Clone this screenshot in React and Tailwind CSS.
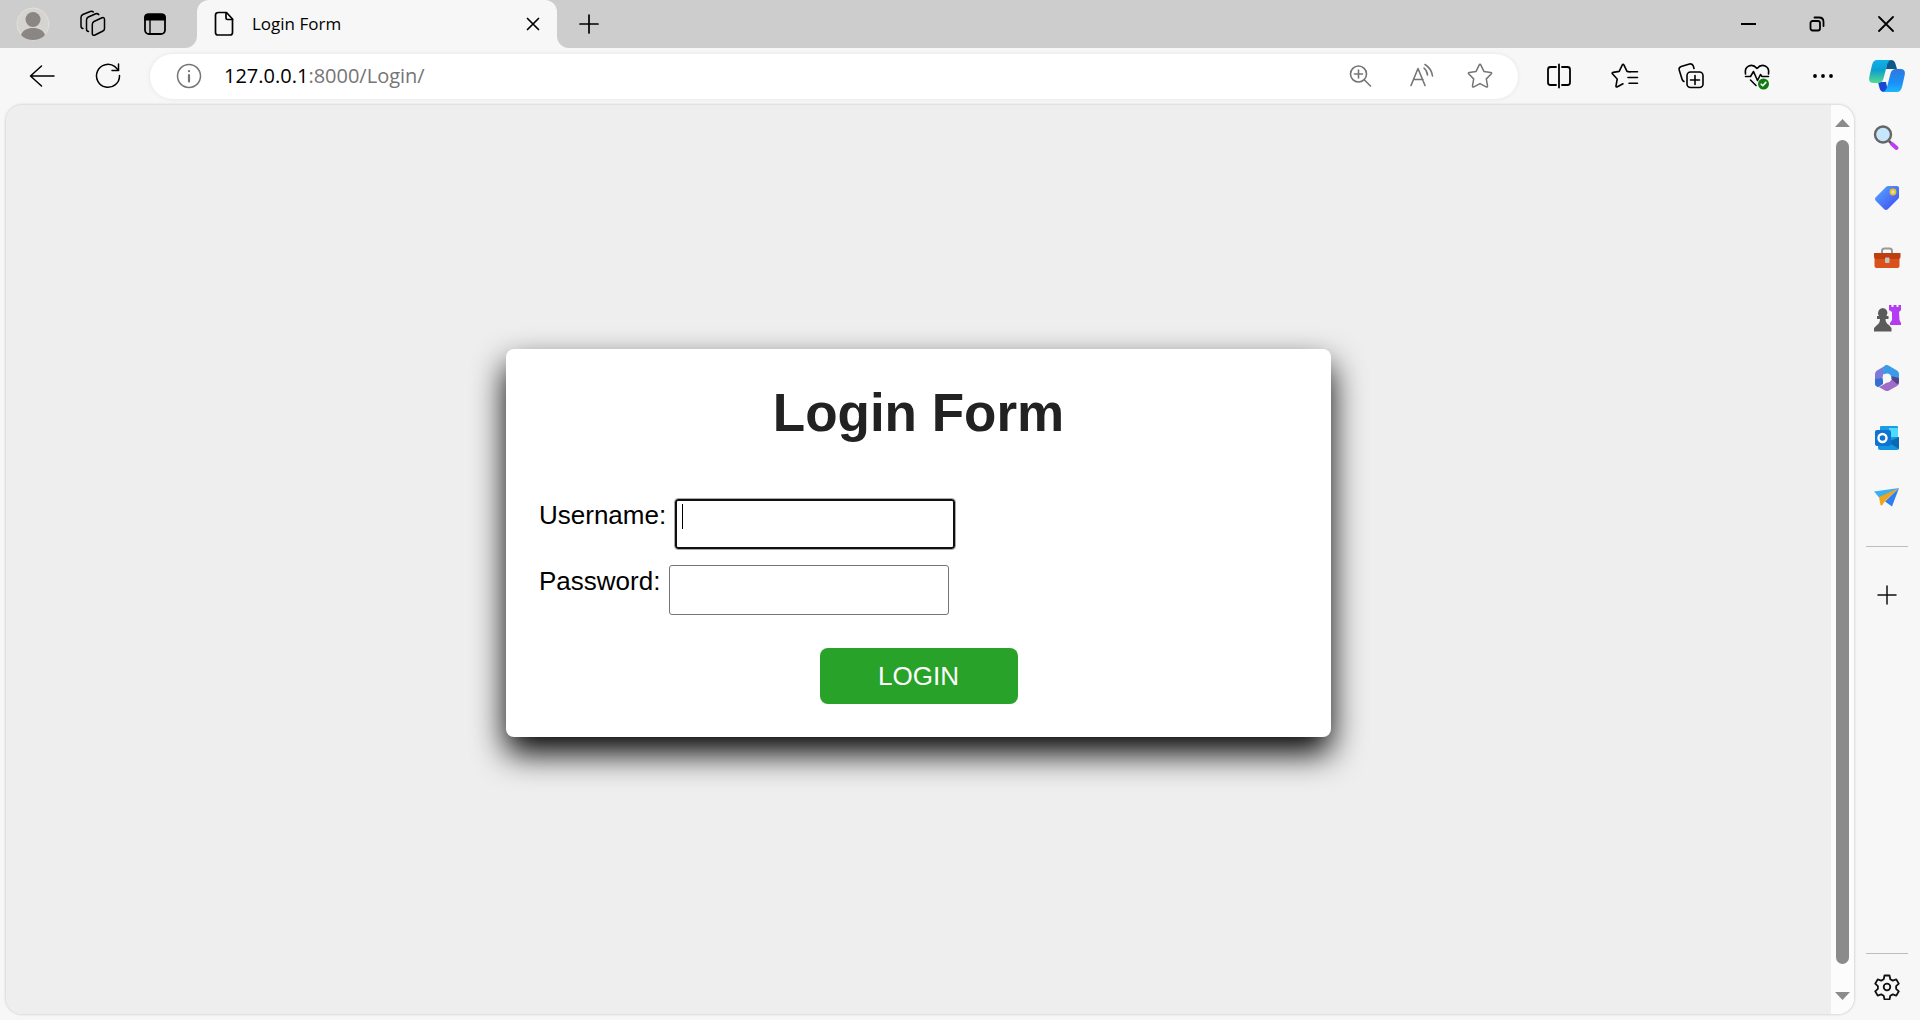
const Svg = ({ children, w = 28, h, sw = 2, className = "" }) => (
  <svg
    width={w}
    height={h || w}
    viewBox={`0 0 ${w} ${h || w}`}
    fill="none"
    stroke="currentColor"
    strokeWidth={sw}
    strokeLinecap="round"
    strokeLinejoin="round"
    className={`shrink-0 ${className}`}
    aria-hidden="true"
  >
    {children}
  </svg>
);

const IconButton = ({ label, className = "", children }) => (
  <button type="button" aria-label={label} className={`flex shrink-0 items-center justify-center ${className}`}>
    {children}
  </button>
);

const STAR = "M13.100 3.100q.9-1.600 1.800 0l3 6.300 6.700 1q1.800.3.600 1.600l-4.900 4.900 1.200 6.900q.2 1.800-1.400 1L14 21.600l-6.100 3.200q-1.600.8-1.400-1l1.200-6.900-4.900-4.900q-1.200-1.300.6-1.600l6.700-1z";

function TabStrip() {
  return (
    <header className="flex h-12 items-stretch bg-[#f7f7f7] text-black">
      <div className="flex w-[197px] shrink-0 items-center rounded-br-xl bg-[#cdcdcd] pl-[15px]">
        <IconButton label="Profile" className="w-9">
          <Svg w={34} sw={1}>
            <circle cx="17" cy="17" r="16" fill="#d6d4d0" stroke="#e3e1dd" />
            <circle cx="17" cy="12.500" r="7.500" fill="#8a8683" stroke="none" />
            <path d="M5 28c2-5 6-7 12-7s10 2 12 7c-3 3.500-7 5-12 5s-9-1.500-12-5z" fill="#8a8683" stroke="none" />
          </Svg>
        </IconButton>
        <IconButton label="Workspaces" className="ml-6 w-9">
          <Svg w={28} sw={1.500}>
            <path d="M15 11.500l8-3.700q2.500-.8 2.500 1.700v9q0 1.800-1.500 2.500l-8 4q-2.700 1-2.700-1.500v-9q0-2.200 1.700-3z" />
            <path d="M9.500 21.500q-2-.3-2-2.500v-9q0-2 1.800-3l7.500-3.200q2-.6 3 .8" />
            <path d="M4 18.500q-2-.3-2-2.500V7.500q0-2 1.800-3l7.500-3q2-.7 3 .5" />
          </Svg>
        </IconButton>
        <IconButton label="Tab actions menu" className="ml-[26px] w-9">
          <Svg w={24} sw={1.800}>
            <rect x="2" y="2.500" width="20" height="19.500" rx="4" />
            <path d="M2 7.500V5.500q0-3 3-3h14q3 0 3 3v2z" fill="currentColor" />
            <path d="M7 8v14" strokeWidth="1.400" />
          </Svg>
        </IconButton>
      </div>
      <div className="flex w-[360px] bg-[linear-gradient(#cdcdcd_50%,#f7f7f7_50%)]">
        <div className="flex flex-1 items-center rounded-t-xl bg-[#f7f7f7] pr-3 pl-[15px]">
          <Svg w={24} h={26} sw={1.700}>
            <path d="M6.500 1.500h8l6 6.500v13.500q0 2.500-2.500 2.500H6q-2.500 0-2.500-2.500v-17.500q0-2.500 3-2.500z" />
            <path d="M14 2v5q0 1.500 1.500 1.500h5" />
          </Svg>
          <span className="ml-4 flex-1 text-[17px]">Login Form</span>
          <IconButton label="Close tab" className="size-6">
            <Svg w={14} sw={1.700}><path d="M1.500 1.500l11 11M12.500 1.500l-11 11" /></Svg>
          </IconButton>
        </div>
      </div>
      <div className="flex flex-1 rounded-bl-xl bg-[#cdcdcd]">
        <IconButton label="New tab" className="w-16">
          <Svg w={20} sw={1.700}><path d="M10 1v18M1 10h18" /></Svg>
        </IconButton>
        <div className="flex-1" />
        <IconButton label="Minimize" className="w-[69px]">
          <Svg w={16} sw={2}><path d="M1 8h15" strokeLinecap="butt" /></Svg>
        </IconButton>
        <IconButton label="Restore" className="w-[69px]">
          <Svg w={16} sw={1.800}>
            <rect x="1.500" y="5" width="9.500" height="9.500" rx="2" />
            <path d="M5.500 1.500h4.500q4.500 0 4.500 4.500v4" />
          </Svg>
        </IconButton>
        <IconButton label="Close window" className="w-[69px]">
          <Svg w={16} sw={1.800}><path d="M1 1l14 14M15 1L1 15" /></Svg>
        </IconButton>
      </div>
    </header>
  );
}

function Toolbar() {
  return (
    <nav className="flex h-[57px] items-center bg-[#f7f7f7] pb-px text-black">
      <IconButton label="Back" className="ml-5 w-11">
        <Svg w={26} sw={1.500}><path d="M25 13H1.500M12.500 3L1.500 13l11 10" /></Svg>
      </IconButton>
      <IconButton label="Refresh" className="ml-[22px] w-11">
        <Svg w={26} sw={1.500}>
          <path d="M24.500 12.500a11.500 11.500 0 1 1-4.500-8.800l3.500 3.600" />
          <path d="M23.500 1v6.500h-6.500" />
        </Svg>
      </IconButton>
      <form className="ml-5 flex h-[45px] flex-1 items-center rounded-full bg-white pr-6 pl-[26px] text-[#757575] shadow-[0_0_5px_rgba(0,0,0,0.08)]">
        <IconButton label="View site information">
          <Svg w={26} sw={1.500}>
            <circle cx="13" cy="13" r="11.500" />
            <path d="M13 12v6.500M13 8v.2" strokeWidth="2.200" />
          </Svg>
        </IconButton>
        <a href="#address" className="ml-[22px] flex-1 text-[20px]">
          <span className="text-black">127.0.0.1</span>:8000/Login/
        </a>
        <IconButton label="Zoom">
          <Svg w={24} sw={1.600}>
            <circle cx="10.500" cy="10" r="8" />
            <path d="M16.500 16l6 6M10.500 6v8M6.500 10h8" />
          </Svg>
        </IconButton>
        <IconButton label="Read aloud" className="ml-9">
          <Svg w={26} sw={1.600}>
            <path d="M3 22.500L10 5.500l7 17M5.500 16.500h9.500M16 5q3 2.500 3.500 7M17 1.500q6.500 4 7.500 11.500" />
          </Svg>
        </IconButton>
        <IconButton label="Add to favorites" className="ml-8">
          <Svg w={28} sw={1.500}><path d={STAR} /></Svg>
        </IconButton>
      </form>
      <div className="ml-[27px] flex items-center gap-[38px]">
        <IconButton label="Split screen">
          <Svg w={28} sw={1.800}>
            <path d="M11 5H5.500q-2.500 0-2.500 2.500v13q0 2.500 2.500 2.500H11M17 5h5.500q2.500 0 2.500 2.500v13q0 2.500-2.500 2.500H17M14 2.500v23" />
          </Svg>
        </IconButton>
        <IconButton label="Favorites">
          <Svg w={28} sw={1.600}>
            <path d="M19 10l-3-.6-3-6.300q-.9-1.600-1.800 0l-3 6.300-6 1q-1.800.3-.6 1.600L6.200 17 5 23.800q-.2 1.800 1.400 1l5.600-3M17.500 9.800h9M17 15.500h9.500M18 21.200h8.500" />
          </Svg>
        </IconButton>
        <IconButton label="Collections">
          <Svg w={28} sw={1.600}>
            <rect x="10" y="10" width="16" height="15.500" rx="3.500" />
            <path d="M18 13.500v9M13.500 18h9M7 19.500q-1.500-.6-2-2.500L2.200 8q-.7-2.800 2-3.600L12.500 2q3-.6 3.800 2l.7 2.500" />
          </Svg>
        </IconButton>
        <IconButton label="Browser essentials">
          <Svg w={28} sw={1.600}>
            <path d="M2.500 12C1 4 9 .500 14 6.500c5-6 13-2.500 11.500 5.500M2.500 14.500h5l3-5 4 9 3-6 1.500 2H25.500M7.500 18l5.500 5.500" />
            <circle cx="20.500" cy="22" r="5.500" fill="#0f7b0f" stroke="none" />
            <path d="M18.200 22.200l1.600 1.600 3-3.400" stroke="#fff" />
          </Svg>
        </IconButton>
        <IconButton label="Settings and more">
          <Svg w={28} sw={1}>
            <g fill="currentColor" stroke="none">
              <circle cx="6" cy="14" r="1.900" /><circle cx="14" cy="14" r="1.900" /><circle cx="22" cy="14" r="1.900" />
            </g>
          </Svg>
        </IconButton>
      </div>
      <IconButton label="Copilot" className="ml-4 w-[67px]">
        <svg width="36" height="32" viewBox="0 0 36 32" aria-hidden="true">
          <defs>
            <linearGradient id="cpA" x1="0" y1="0" x2="0" y2="1">
              <stop offset="0" stopColor="#12b0ea" /><stop offset=".45" stopColor="#0c9fd0" /><stop offset="1" stopColor="#55db8e" />
            </linearGradient>
            <linearGradient id="cpB" x1="0" y1="0" x2="0" y2="1">
              <stop offset="0" stopColor="#2e78dc" /><stop offset=".6" stopColor="#1b90f8" /><stop offset="1" stopColor="#1cb8fb" />
            </linearGradient>
          </defs>
          <path d="M18 0h4q3.500 0 4.500 4l1.500 5H17z" fill="#10588a" />
          <path d="M9 22h8l2 10h-4q-3.500 0-4.500-4z" fill="#1846d6" />
          <path d="M8 0h14q-3 1-4 5l-3.500 13.500Q13.300 23 9 23H4.500Q-.8 23 .3 17L3 5q1.300-5 5-5z" fill="url(#cpA)" />
          <path d="M28 32H14q3-1 4-5l3.500-13.500Q22.700 9 27 9h4.500q5.300 0 4.200 6L33 27q-1.300 5-5 5z" fill="url(#cpB)" />
        </svg>
      </IconButton>
    </nav>
  );
}

const SIDE_ICONS = [
  ["Search", (
    <g key="s">
      <path d="M16 17l3 3" stroke="#555" strokeWidth="2.500" />
      <path d="M19 20l4.500 4" stroke="#bd3df2" strokeWidth="4" strokeLinecap="round" />
      <circle cx="10" cy="10.500" r="8" fill="#c5e6fb" stroke="#666" strokeWidth="2.400" />
    </g>
  )],
  ["Shopping", (
    <g key="t">
      <path d="M15 2h9q2 0 2 2v9q0 1-1 2L15 25q-2 2-4 0l-8-8q-2-2 0-4L13 3q1-1 2-1z" fill="url(#tag)" />
      <circle cx="20" cy="8" r="2.500" fill="#cfe0ff" stroke="#f2c01c" strokeWidth="1.800" />
    </g>
  )],
  ["Tools", (
    <g key="b">
      <path d="M9 9V7q0-2.500 2.500-2.500h5Q19 4.500 19 7v2" fill="none" stroke="#999" strokeWidth="2" />
      <rect x="1.500" y="13" width="25" height="11" rx="2" fill="#d9521d" />
      <path d="M1 9h26.500v4q0 2-2 2H3q-2 0-2-2z" fill="#bf3e10" />
      <rect x="12" y="13.500" width="4.500" height="5.500" rx="1" fill="#c4c4c4" />
    </g>
  )],
  ["Games", (
    <g key="g">
      <path d="M16 1h2.500v2h2V1h3v2h2V1H28v5l-2 2 .5 8 1.500 3v2H17v-2l2-3V8l-3-2z" fill="#b43bf2" />
      <path d="M9.500 4a5 5 0 0 1 4 8h2v3h-3q0 4 3.500 6l2.500 3v3.500H1V24l3-3q3-2 3-6H4v-3h2a5 5 0 0 1 3.500-8z" fill="#5b5b5b" />
    </g>
  )],
  ["Microsoft 365", (
    <g key="m">
      <path d="M11 2.500L4 6.500q-2 1-2 3.500v9q0 3 3 4l5-3.500V8q0-3 3-6.500z" fill="#7f79d9" />
      <path d="M2 15v5q0 2 3 3l5-3v-6z" fill="#3370cf" />
      <path d="M15 1.200l9 5.300q2 1 2 3.500v8l-8-4-8-4V7q.5-7 5-5.800z" fill="#3a9be6" />
      <path d="M26 16.500V19q0 2-2 3l-8 4.500q-2 1-4 0l-8-4.500q2.500 1 5-.5l9-5.500z" fill="#a06cc9" />
      <path d="M26 14v4q0 2-2 2l-6-5v-3z" fill="#55438f" />
      <circle cx="14" cy="14" r="4.500" fill="#f7f7f7" />
    </g>
  )],
  ["Outlook", (
    <g key="o">
      <path d="M7 3q0-1 1-1h16q1 0 1 1v11H7z" fill="#1b9de2" />
      <path d="M16 4h9v9h-9z" fill="#50d9ff" />
      <path d="M5 15l21-2v11q0 2-2 2H7q-2 0-2-2z" fill="#1495df" />
      <path d="M26 13v12L15 18z" fill="#0b69b0" />
      <rect x="2" y="6" width="16" height="16" rx="2" fill="#0f74d1" />
      <circle cx="9.500" cy="14" r="4" fill="none" stroke="#fff" strokeWidth="2.400" />
    </g>
  )],
  ["Drop", (
    <g key="d">
      <path d="M1 7.500L26 4 12 13l-5 1.500z" fill="#38b0f2" />
      <path d="M6 13l20-9L12 17l-3 4.500-1.500-.5z" fill="#eea51b" />
      <path d="M26 4l-7 18.500-7-5z" fill="#2f7df0" />
    </g>
  )],
];

function Sidebar() {
  return (
    <aside className="flex w-[66px] shrink-0 flex-col items-center pt-1 text-[#111]">
      {SIDE_ICONS.map(([label, art]) => (
        <IconButton key={label} label={label} className="h-[60px] w-full">
          <svg width="28" height="30" viewBox="0 0 28 30" fill="none" aria-hidden="true">
            <defs>
              <linearGradient id="tag" x1="0" y1="0" x2="1" y2="1">
                <stop offset="0" stopColor="#55adff" /><stop offset="1" stopColor="#4146f0" />
              </linearGradient>
            </defs>
            {art}
          </svg>
        </IconButton>
      ))}
      <hr className="mt-[17px] w-[42px] border-[#bdbdbd]" />
      <IconButton label="Customize" className="mt-[18px] h-[60px] w-full">
        <Svg w={20} sw={1.500}><path d="M10 1v18M1 10h18" /></Svg>
      </IconButton>
      <hr className="mt-auto w-[42px] border-[#bdbdbd]" />
      <IconButton label="Settings" className="h-[66px] w-full">
        <Svg w={26} sw={1.800}>
          <path d="M10.500 1.500h5l.8 3.700 2.500 1.400 3.500-1.200 2.500 4.300-2.700 2.500v2.600l2.700 2.500-2.500 4.300-3.500-1.200-2.500 1.400-.8 3.700h-5l-.8-3.700-2.500-1.400-3.500 1.200-2.500-4.300 2.700-2.500v-2.600L1.200 9.700l2.500-4.300 3.500 1.200 2.500-1.400z" />
          <circle cx="13" cy="13" r="3.300" />
        </Svg>
      </IconButton>
    </aside>
  );
}

function LoginCard() {
  return (
    <form className="w-[825px] rounded-lg bg-white p-[33px] font-['Liberation_Sans',Arial,sans-serif] shadow-[0_16px_33px_#000]">
      <h1 className="text-center text-[53px] leading-[62px] font-bold text-[#222]">Login Form</h1>
      <div className="mt-[55px] flex items-start gap-[9px] text-[26px] text-black">
        <label htmlFor="username" className="leading-[32px]">Username:</label>
        <div className="relative">
          <input id="username" type="text" className="block h-[50px] w-[280px] rounded-[3px] border-2 border-[#101010] bg-white px-1 outline-1 outline-[#a8a8a8]" />
          <span className="absolute top-[5px] left-[7px] h-[25px] w-px bg-black" />
        </div>
      </div>
      <div className="mt-4 flex items-start gap-[9px] text-[26px] text-black">
        <label htmlFor="password" className="leading-[32px]">Password:</label>
        <input id="password" type="password" className="block h-[50px] w-[280px] rounded-[3px] border border-[#767676] bg-white px-1" />
      </div>
      <button type="button" className="mx-auto mt-[33px] block h-14 w-[198px] rounded-lg bg-[#28a228] text-[26px] text-white">
        LOGIN
      </button>
    </form>
  );
}

function ScrollBar() {
  return (
    <div className="flex w-[23px] shrink-0 flex-col items-center bg-[#fcfcfc] py-[14px] text-[#8b8b8b]">
      <svg width="15" height="8" viewBox="0 0 15 8" fill="currentColor" aria-hidden="true"><path d="M7.500 0L15 8H0z" /></svg>
      <div className="mt-[13px] mb-7 w-[13px] flex-1 rounded-full bg-[#8b8b8b]" />
      <svg width="15" height="8" viewBox="0 0 15 8" fill="currentColor" aria-hidden="true"><path d="M7.500 8L15 0H0z" /></svg>
    </div>
  );
}

export default function App() {
  return (
    <div className="flex h-screen flex-col bg-[#f7f7f7] font-['Open_Sans','Noto_Sans',sans-serif]">
      <TabStrip />
      <Toolbar />
      <div className="flex min-h-0 flex-1">
        <div className="mb-[6px] ml-[6px] flex flex-1 overflow-hidden rounded-2xl shadow-[0_0_3px_rgba(0,0,0,0.25)]">
          <main className="flex flex-1 items-start justify-center bg-[#eeeeee] pt-[244px]">
            <LoginCard />
          </main>
          <ScrollBar />
        </div>
        <Sidebar />
      </div>
    </div>
  );
}
